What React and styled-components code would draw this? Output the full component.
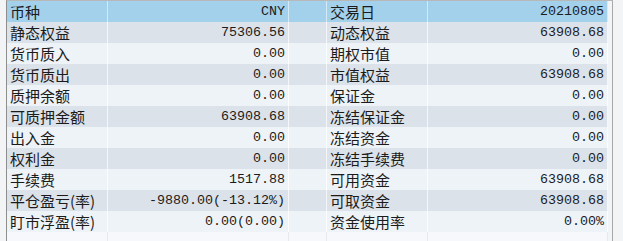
import React from 'react';
import styled, { createGlobalStyle } from 'styled-components';

const GlobalStyle = createGlobalStyle`
  html, body {
    margin: 0;
    padding: 0;
    background: #f3f4f6;
  }
`;

const Page = styled.div`
  width: 623px;
  height: 241px;
  overflow: hidden;
  display: flex;
  flex-direction: column;
`;

const TabStrip = styled.div`
  display: flex;
  height: 3px;
  padding-left: 7px;
  background: #ffffff;
`;

const Tab = styled.div`
  width: 47px;
  background: #d8d8d8;
  border-right: 1px solid #707070;
`;

const Frame = styled.div`
  flex: 1;
  margin-left: 6px;
  width: 605px;
  border-left: 1px solid #8e8e8e;
  border-right: 1px solid #a9a9a9;
  border-top: 1px solid #b8b8b8;
  background: #f2f5f8;
`;

const colors = {
  head: { bg: '#a3d0ea', line: '#d4eaf6' },
  dark: { bg: '#dce2ea', line: '#f4f6f9' },
  light: { bg: '#eef3f8', line: '#fbfcfe' },
  blank: { bg: '#f6f8fb', line: '#e6eaef' },
};

const Row = styled.div`
  display: grid;
  grid-template-columns: 101px 181px 38px 101px 180px;
  height: 21px;
`;

const Cell = styled.div`
  background: ${(p) => colors[p.$tone].bg};
  border-right: 1px solid ${(p) => colors[p.$tone].line};
  color: #1b1b1b;
  line-height: 21px;
  white-space: nowrap;
  overflow: hidden;
`;

const Label = styled(Cell)`
  font-family: 'Noto Sans CJK SC', 'Liberation Sans', sans-serif;
  font-size: 15px;
  padding-left: 3px;
  letter-spacing: 0px;
`;

const Value = styled(Cell)`
  font-family: 'Liberation Mono', 'Noto Sans CJK SC', monospace;
  font-size: 13.33px;
  text-align: right;
  padding-right: 3px;
`;

const rows = [
  ['币种', 'CNY', '交易日', '20210805'],
  ['静态权益', '75306.56', '动态权益', '63908.68'],
  ['货币质入', '0.00', '期权市值', '0.00'],
  ['货币质出', '0.00', '市值权益', '63908.68'],
  ['质押余额', '0.00', '保证金', '0.00'],
  ['可质押金额', '63908.68', '冻结保证金', '0.00'],
  ['出入金', '0.00', '冻结资金', '0.00'],
  ['权利金', '0.00', '冻结手续费', '0.00'],
  ['手续费', '1517.88', '可用资金', '63908.68'],
  ['平仓盈亏(率)', '-9880.00(-13.12%)', '可取资金', '63908.68'],
  ['盯市浮盈(率)', '0.00(0.00)', '资金使用率', '0.00%'],
];

const App = () => {
  return (
    <Page>
      <GlobalStyle />
      <TabStrip>
        {Array.from({ length: 8 }).map((_, i) => (
          <Tab key={i} />
        ))}
      </TabStrip>
      <Frame>
        {rows.map(([l1, v1, l2, v2], i) => {
          const tone = i === 0 ? 'head' : i % 2 === 1 ? 'dark' : 'light';
          return (
            <Row key={i}>
              <Label $tone={tone}>{l1}</Label>
              <Value $tone={tone}>{v1}</Value>
              <Cell $tone={tone} />
              <Label $tone={tone}>{l2}</Label>
              <Value $tone={tone}>{v2}</Value>
            </Row>
          );
        })}
        <Row>
          <Cell $tone="blank" />
          <Cell $tone="blank" />
          <Cell $tone="blank" />
          <Cell $tone="blank" />
          <Cell $tone="blank" />
        </Row>
      </Frame>
    </Page>
  );
};

export default App;
